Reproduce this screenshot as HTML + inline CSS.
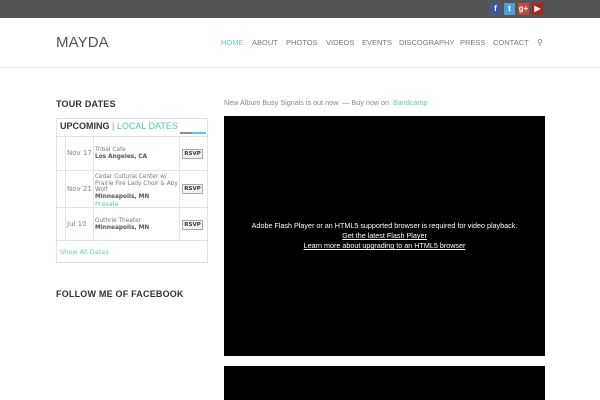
<!DOCTYPE html>
<html><head><meta charset="utf-8"><style>
*{margin:0;padding:0;box-sizing:border-box}
body{width:600px;height:400px;overflow:hidden;background:#fff;font-family:"Liberation Sans",sans-serif;position:relative}
.abs{position:absolute}
.top{left:0;top:0;width:600px;height:18px;background:#555}
.ic{top:3px;width:11px;height:12px;color:#fff;font-size:8px;text-align:center;line-height:12px;font-weight:bold}
.hdr{left:0;top:18px;width:600px;height:50px;border-bottom:1px solid #e8e8e8}
.logo{left:56px;top:34px;font-size:15px;color:#555;letter-spacing:0.1px}
.nav{top:38px;font-size:7.5px;color:#777}
h3{position:absolute;font-size:9px;color:#333;font-weight:bold;letter-spacing:0.2px}
.box{left:56px;top:118px;width:152px;height:145px;border:1px solid #e3e3e3}
.row{position:absolute;left:0;width:150px;border-top:1px solid #e3e3e3;font-size:6px;color:#777;font-family:"DejaVu Sans",sans-serif}
.row .d{position:absolute;left:10px;font-size:7px;color:#888}
.row .v{position:absolute;left:38px;line-height:6.5px;font-size:5.8px;white-space:nowrap}
.row b{color:#555}
.rsvp{position:absolute;left:125px;width:21px;height:10px;border:1px solid #aaa;background:#f3f3f3;font-size:5.5px;font-weight:bold;color:#333;text-align:center;line-height:8px}
.vl{position:absolute;top:0;width:1px;background:#e3e3e3}
.blk{background:#000;left:224px;width:321px}
.msg{left:224px;width:321px;text-align:center;color:#fff;font-size:7.2px;line-height:10px;top:221px}
.msg u{text-decoration:underline}
</style></head><body>
<div class="abs top"></div>
<div class="abs ic" style="left:490px;background:#3b5998">f</div>
<div class="abs ic" style="left:504px;background:#4a9ed9">t</div>
<div class="abs ic" style="left:518px;background:#c8473a">g+</div>
<div class="abs ic" style="left:532px;background:#b0221b">▶</div>
<div class="abs hdr"></div>
<div class="abs logo">MAYDA</div>
<div class="abs nav" style="left:221px;color:#6cc9b5">HOME</div>
<div class="abs nav" style="left:252px">ABOUT</div>
<div class="abs nav" style="left:286px">PHOTOS</div>
<div class="abs nav" style="left:326px">VIDEOS</div>
<div class="abs nav" style="left:362px">EVENTS</div>
<div class="abs nav" style="left:399px">DISCOGRAPHY</div>
<div class="abs nav" style="left:460px">PRESS</div>
<div class="abs nav" style="left:493px">CONTACT</div>
<div class="abs nav" style="left:537px;font-size:8px">&#9906;</div>

<h3 style="left:56px;top:99px">TOUR DATES</h3>
<div class="abs box">
 <div style="position:absolute;left:3px;top:2px;font-size:9px;font-weight:bold;color:#333">UPCOMING <span style="font-weight:normal;color:#999">|</span> <span style="font-weight:normal;color:#5cc5b5">LOCAL DATES</span></div>
 <div style="position:absolute;left:123px;top:13px;width:12px;height:2px;background:#8a8aa0"></div>
 <div style="position:absolute;left:135px;top:13px;width:14px;height:2px;background:#5ec8d8"></div>
 <div class="vl" style="left:8px;top:17px;height:104px"></div>
 <div class="vl" style="left:36px;top:17px;height:104px"></div>
 <div class="vl" style="left:122px;top:17px;height:104px"></div>
 <div class="row" style="top:17px;height:34px"><span class="d" style="top:12px">Nov 17</span><span class="v" style="top:10px">Tribal Cafe<br><b>Los Angeles, CA</b></span><span class="rsvp" style="top:12px">RSVP</span></div>
 <div class="row" style="top:51px;height:37px"><span class="d" style="top:14px">Nov 21</span><span class="v" style="top:3px">Cedar Cultural Center w/<br>Prairie Fire Lady Choir &amp; Aby<br>Wolf<br><b>Minneapolis, MN</b><br><span style="color:#5cc5b5;font-size:6.5px;line-height:9px">Presale</span></span><span class="rsvp" style="top:13px">RSVP</span></div>
 <div class="row" style="top:88px;height:33px"><span class="d" style="top:12px">Jul 10</span><span class="v" style="top:10px">Guthrie Theater<br><b>Minneapolis, MN</b></span><span class="rsvp" style="top:12px">RSVP</span></div>
 <div class="row" style="top:121px;height:22px"><span style="position:absolute;left:3px;top:7px;color:#6cc9b5;font-size:6.5px">Show All Dates</span></div>
</div>
<h3 style="left:56px;top:289px">FOLLOW ME OF FACEBOOK</h3>

<div class="abs" style="left:224px;top:98px;font-size:7.2px;color:#888">New Album Busy Signals is out now &nbsp;— Buy now on &nbsp;<span style="color:#6cc9b5">Bandcamp</span></div>
<div class="abs blk" style="top:116px;height:240px"></div>
<div class="abs msg">Adobe Flash Player or an HTML5 supported browser is required for video playback.<br><u>Get the latest Flash Player </u><br><u>Learn more about upgrading to an HTML5 browser</u></div>
<div class="abs blk" style="top:366px;height:34px"></div>
</body></html>
